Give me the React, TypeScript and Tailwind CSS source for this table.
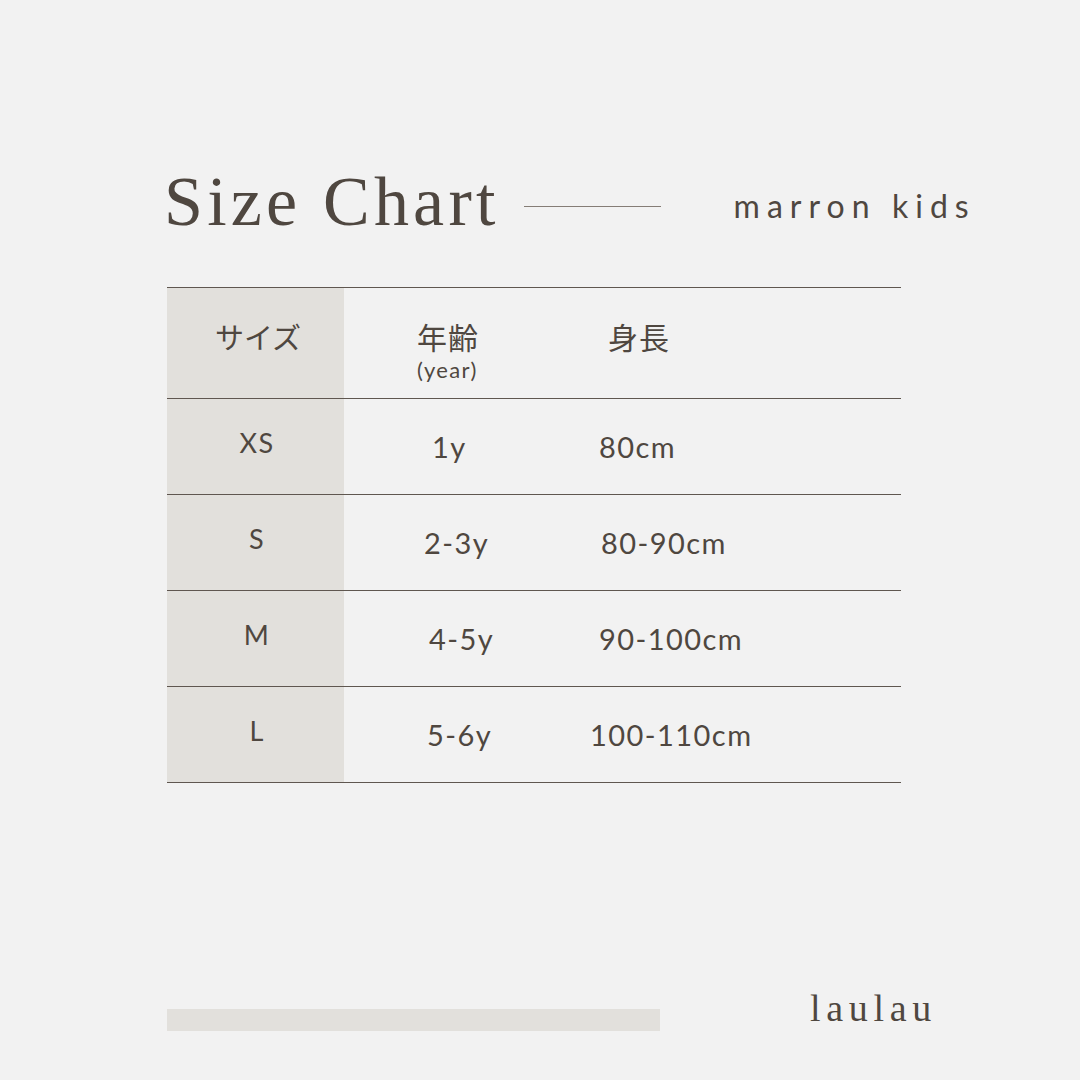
import React from "react";

type Row = {
  size: string;
  age: string;
  height: string;
  agePad: string;
  heightPad: string;
};

const rows: Row[] = [
  { size: "XS", age: "1y", height: "80cm", agePad: "pl-[88px]", heightPad: "pl-[55px]" },
  { size: "S", age: "2-3y", height: "80-90cm", agePad: "pl-[80px]", heightPad: "pl-[57px]" },
  { size: "M", age: "4-5y", height: "90-100cm", agePad: "pl-[85px]", heightPad: "pl-[55px]" },
  { size: "L", age: "5-6y", height: "100-110cm", agePad: "pl-[83px]", heightPad: "pl-[46px]" },
];

const serif = "font-['Liberation_Serif',serif]";
const sans = "font-['Lato','Noto_Sans_CJK_JP',sans-serif]";
const jp = "font-['Noto_Sans_CJK_JP',sans-serif]";

function SizeRow({ row }: { row: Row }) {
  return (
    <div className="flex h-[96px] border-t-[1.5px] border-[#5f5750]">
      <div className="flex w-[177px] items-center justify-center bg-[#e2e0dc] pb-[6px] pl-[3px]">
        <span className={`${sans} text-[27px] tracking-[0.05em]`}>{row.size}</span>
      </div>
      <div className={`flex w-[200px] items-center ${row.agePad}`}>
        <span className={`${sans} text-[29px] tracking-[0.05em]`}>{row.age}</span>
      </div>
      <div className={`flex flex-1 items-center ${row.heightPad}`}>
        <span className={`${sans} text-[29px] tracking-[0.05em]`}>{row.height}</span>
      </div>
    </div>
  );
}

export default function App() {
  return (
    <div className="flex h-[1080px] w-[1080px] flex-col bg-[#f2f2f2] pl-[167px] text-[#4f4740]">
      {/* title */}
      <div className="mt-[166px] flex h-[80px] items-center">
        <h1 className={`${serif} -ml-[3px] mb-[9px] text-[70px] leading-none tracking-[0.06em]`}>Size Chart</h1>
        <div className="ml-[24px] h-px w-[137px] bg-[#857d76]" />
        <span className={`${sans} ml-[73px] text-[32px] leading-none tracking-[0.22em]`}>marron kids</span>
      </div>

      {/* table */}
      <div className="mt-[41px] w-[734px] border-b-[1.5px] border-[#5f5750]">
        <div className="flex h-[111px] border-t-[1.5px] border-[#5f5750]">
          <div className="flex w-[177px] items-start justify-center bg-[#e2e0dc] pt-[34px] pl-[5px]">
            <span className={`${jp} text-[29px] leading-none`}>サイズ</span>
          </div>
          <div className="flex w-[200px] flex-col items-start pl-[73px] pt-[33px]">
            <span className={`${jp} text-[30px] leading-none tracking-[0.03em]`}>年齢</span>
            <span className={`${sans} mt-[8px] text-[22px] leading-none tracking-[0.06em]`}>(year)</span>
          </div>
          <div className="flex flex-1 items-start pl-[64px] pt-[33px]">
            <span className={`${jp} text-[30px] leading-none tracking-[0.03em]`}>身長</span>
          </div>
        </div>
        {rows.map((r) => (
          <SizeRow key={r.size} row={r} />
        ))}
      </div>

      {/* footer */}
      <div className="mt-auto mb-[49px] flex items-end">
        <div className="h-[22px] w-[493px] bg-[#e2e0dc]" />
        <span className={`${serif} ml-[150px] mb-[4px] text-[38px] leading-none tracking-[0.15em]`}>laulau</span>
      </div>
    </div>
  );
}
